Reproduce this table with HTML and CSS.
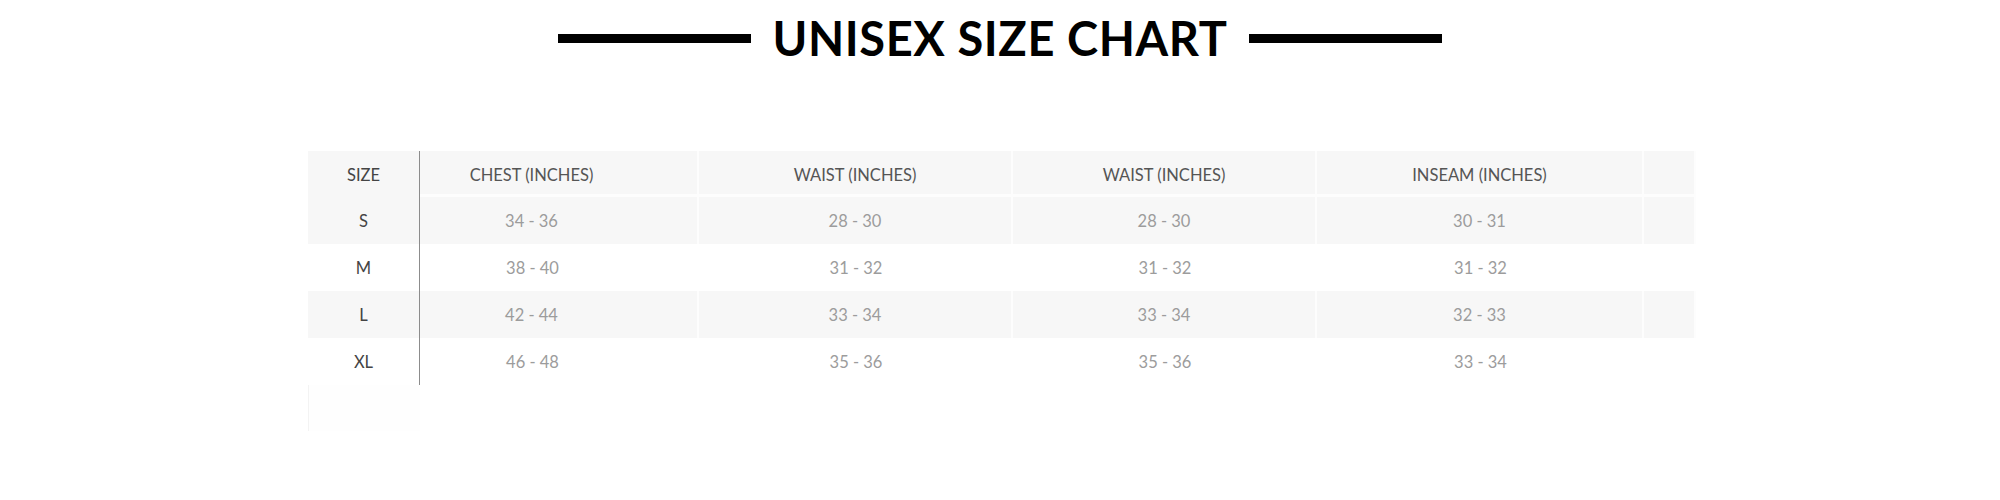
FILE: index.html
```html
<!DOCTYPE html>
<html lang="en">
<head>
<meta charset="utf-8">
<title>Unisex Size Chart</title>
<link rel="stylesheet" href="styles.css">
</head>
<body>
<div class="page">
  <header class="title">
    <span class="rule"></span>
    <h1>UNISEX SIZE CHART</h1>
    <span class="rule"></span>
  </header>

  <div class="chart">
    <div class="row head shade">
      <div class="cell size">SIZE</div>
      <div class="cell chest">CHEST (INCHES)</div>
      <div class="cell">WAIST (INCHES)</div>
      <div class="cell">WAIST (INCHES)</div>
      <div class="cell">INSEAM (INCHES)</div>
      <div class="cell"></div>
    </div>
    <div class="row shade">
      <div class="cell size">S</div>
      <div class="cell chest val">34 - 36</div>
      <div class="cell val">28 - 30</div>
      <div class="cell val">28 - 30</div>
      <div class="cell val">30 - 31</div>
      <div class="cell"></div>
    </div>
    <div class="row">
      <div class="cell size">M</div>
      <div class="cell chest val">38 - 40</div>
      <div class="cell val">31 - 32</div>
      <div class="cell val">31 - 32</div>
      <div class="cell val">31 - 32</div>
      <div class="cell"></div>
    </div>
    <div class="row shade">
      <div class="cell size">L</div>
      <div class="cell chest val">42 - 44</div>
      <div class="cell val">33 - 34</div>
      <div class="cell val">33 - 34</div>
      <div class="cell val">32 - 33</div>
      <div class="cell"></div>
    </div>
    <div class="row">
      <div class="cell size">XL</div>
      <div class="cell chest val">46 - 48</div>
      <div class="cell val">35 - 36</div>
      <div class="cell val">35 - 36</div>
      <div class="cell val">33 - 34</div>
      <div class="cell"></div>
    </div>
    <div class="row tail">
      <div class="cell blank"></div>
    </div>
  </div>
</div>
</body>
</html>
```

FILE: styles.css
```css
* {
  box-sizing: border-box;
}

html, body {
  margin: 0;
  padding: 0;
  background: #ffffff;
}

body {
  font-family: Lato, "Liberation Sans", sans-serif;
  width: 2000px;
}

.page {
  display: flex;
  flex-direction: column;
  align-items: center;
}

/* ---------- title ---------- */
.title {
  display: flex;
  align-items: center;
  gap: 21px;
  padding-top: 10px;
}

.title h1 {
  margin: 0;
  font-family: Lato, "Liberation Sans", sans-serif;
  font-weight: 700;
  font-size: 47px;
  line-height: 56px;
  color: #000;
  letter-spacing: 0.6px;
}

.rule {
  display: block;
  width: 193px;
  height: 9px;
  background: #000;
}

/* ---------- chart ---------- */
.chart {
  margin-top: 85px;
  width: 1388px;
  margin-left: 4px;
  display: flex;
  flex-direction: column;
}

.row {
  display: grid;
  grid-template-columns: 112px 279px 314px 304px 327px 52px;
  height: 47px;
}

.row.head {
  height: 46px;
}

.cell {
  display: flex;
  align-items: center;
  justify-content: center;
  font-size: 16.5px;
  color: #555;
  white-space: nowrap;
}

.cell.size {
  color: #444;
  border-right: 1px solid #8c8c8c;
}

.row.head .cell.size {
  padding-top: 2px;
}

.cell.chest {
  padding-right: 54px;
}

.cell.val {
  color: #9c9c9c;
  font-size: 16.5px;
}

.row.shade .cell {
  background: #f7f7f7;
}

.row.shade .cell:not(.size) {
  border-right: 2px solid #fdfdfd;
}

.row.head .cell:not(.size) {
  border-bottom: 3px solid #fdfdfd;
  padding-top: 5px;
}

.row.tail {
  grid-template-columns: 112px;
  height: 46px;
}

.cell.blank {
  border-left: 1px solid #f3f3f3;
  background: #fefefe;
}
```
